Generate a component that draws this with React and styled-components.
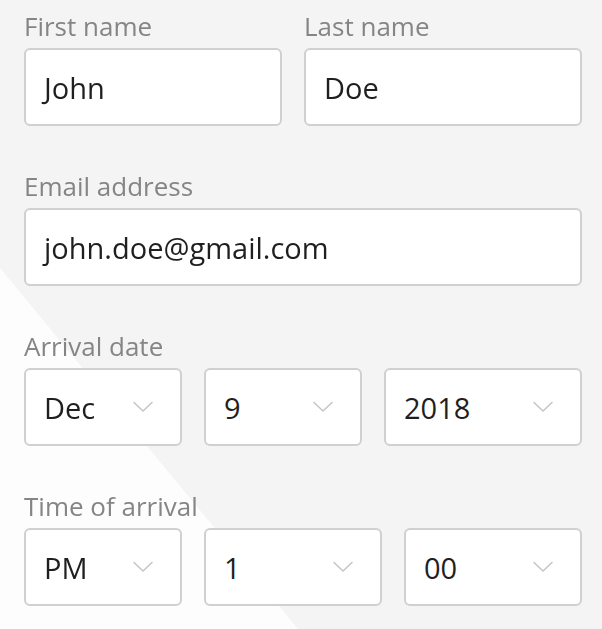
import React from 'react';
import styled, { createGlobalStyle } from 'styled-components';

const GlobalStyle = createGlobalStyle`
  * {
    box-sizing: border-box;
  }
  body {
    margin: 0;
    background: #f4f4f4;
    font-family: 'Open Sans', 'Noto Sans', sans-serif;
  }
  body::before {
    content: '';
    position: fixed;
    inset: 0;
    background: #fdfdfd;
    clip-path: polygon(0 268px, 298px 629px, 0 629px);
    z-index: -1;
  }
`;

const Form = styled.form`
  display: flex;
  flex-direction: column;
  gap: 44px;
  padding: 10px 20px 0 24px;
`;

const Row = styled.div`
  display: grid;
  grid-template-columns: ${(p) => p.cols || '1fr 1fr'};
  gap: 22px;
`;

const Group = styled.div`
  display: flex;
  flex-direction: column;
`;

const Label = styled.label`
  font-size: 26px;
  line-height: 32px;
  color: #858585;
  margin-bottom: 6px;
`;

const Field = styled.div`
  display: flex;
  align-items: center;
  justify-content: space-between;
  height: 78px;
  padding: 0 27px 0 18px;
  background: #fff;
  border: 2px solid #d0d0d0;
  border-radius: 6px;
  font-size: 29px;
  color: #1f1f1f;
`;

const Chevron = () => (
  <svg width="20" height="12" viewBox="0 0 20 12" fill="none">
    <path d="M1 1.5 L10 10 L19 1.5" stroke="#c6c6c6" strokeWidth="1.6" strokeLinecap="round" strokeLinejoin="round" />
  </svg>
);

const Select = ({ value }) => (
  <Field>
    <span>{value}</span>
    <Chevron />
  </Field>
);

export default function App() {
  return (
    <>
      <GlobalStyle />
      <Form>
        <Row cols="258px 1fr">
          <Group>
            <Label>First name</Label>
            <Field>John</Field>
          </Group>
          <Group>
            <Label>Last name</Label>
            <Field>Doe</Field>
          </Group>
        </Row>

        <Group>
          <Label>Email address</Label>
          <Field>john.doe@gmail.com</Field>
        </Group>

        <Group>
          <Label>Arrival date</Label>
          <Row cols="158px 158px 1fr">
            <Select value="Dec" />
            <Select value="9" />
            <Select value="2018" />
          </Row>
        </Group>

        <Group>
          <Label>Time of arrival</Label>
          <Row cols="158px 1fr 1fr">
            <Select value="PM" />
            <Select value="1" />
            <Select value="00" />
          </Row>
        </Group>
      </Form>
    </>
  );
}
